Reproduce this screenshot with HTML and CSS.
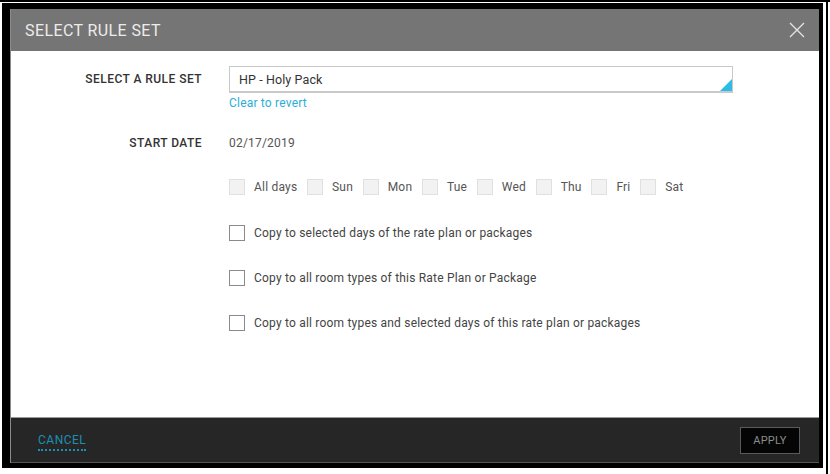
FILE: index.html
```html
<!DOCTYPE html>
<html lang="en">
<head>
<meta charset="utf-8">
<title>Select Rule Set</title>
<link rel="stylesheet" href="styles.css">
</head>
<body>
<div class="screen">
  <div class="frame">
    <div class="dialog">
      <header class="dlg-head">
        <h1 class="dlg-title">SELECT RULE SET</h1>
        <button class="close" aria-label="Close">
          <svg width="16" height="16" viewBox="0 0 16 16"><path d="M1 1 L15 15 M15 1 L1 15" stroke="#e6e6e6" stroke-width="1.3" fill="none"/></svg>
        </button>
      </header>
      <main class="dlg-body">
        <div class="row row-ruleset">
          <span class="lbl">SELECT A RULE SET</span>
          <div class="field">
            <div class="select">HP - Holy Pack<span class="corner"></span></div>
            <a class="clear">Clear to revert</a>
          </div>
        </div>
        <div class="row row-date">
          <span class="lbl">START DATE</span>
          <span class="date">02/17/2019</span>
        </div>
        <div class="days">
          <span class="day"><span class="cb cb-off"></span>All days</span>
          <span class="day"><span class="cb cb-off"></span>Sun</span>
          <span class="day"><span class="cb cb-off"></span>Mon</span>
          <span class="day"><span class="cb cb-off"></span>Tue</span>
          <span class="day"><span class="cb cb-off"></span>Wed</span>
          <span class="day"><span class="cb cb-off"></span>Thu</span>
          <span class="day"><span class="cb cb-off"></span>Fri</span>
          <span class="day"><span class="cb cb-off"></span>Sat</span>
        </div>
        <div class="opts">
          <label class="opt"><span class="cb"></span>Copy to selected days of the rate plan or packages</label>
          <label class="opt"><span class="cb"></span>Copy to all room types of this Rate Plan or Package</label>
          <label class="opt"><span class="cb"></span>Copy to all room types and selected days of this rate plan or packages</label>
        </div>
      </main>
      <footer class="dlg-foot">
        <a class="cancel">CANCEL</a>
        <button class="apply">APPLY</button>
      </footer>
    </div>
  </div>
  <div class="edge"></div>
</div>
</body>
</html>
```
FILE: styles.css
```css
* { box-sizing: border-box; }
html, body { margin: 0; padding: 0; background: #fff; }
body { font-family: Roboto, "Liberation Sans", sans-serif; }

.screen {
  width: 830px;
  height: 474px;
  display: flex;
  align-items: flex-start;
  border-top: 2px solid #000;
  padding-left: 2px;
}
.frame {
  width: 821px;
  height: 465px;
  margin-top: 1px;
  border-style: solid;
  border-color: #000;
  border-width: 6px 4px 5px 8px;
}
.edge {
  width: 2px;
  height: 472px;
  margin-left: 3px;
  background: #000;
}
.dialog {
  height: 100%;
  display: flex;
  flex-direction: column;
  background: #fff;
  border-left: 1px solid #8a8a8a;
}
.dlg-head {
  height: 42px;
  flex: none;
  background: #757575;
  display: flex;
  align-items: center;
  justify-content: space-between;
  padding: 0 14px 0 14px;
}
.dlg-title {
  margin: 0;
  font-size: 16px;
  font-weight: 400;
  color: #ececec;
  letter-spacing: 0.4px;
}
.close {
  border: 0;
  background: none;
  padding: 0;
  width: 16px;
  height: 16px;
  display: flex;
}
.dlg-body {
  flex: 1;
  padding-top: 15px;
  font-size: 12px;
  letter-spacing: 0.2px;
}
.row {
  display: grid;
  grid-template-columns: 191px 1fr;
  column-gap: 27px;
}
.lbl {
  text-align: right;
  font-weight: 500;
  color: #333;
  font-size: 12px;
  letter-spacing: 0.45px;
}
.row-ruleset .lbl { line-height: 27px; }
.field { width: 504px; }
.select {
  position: relative;
  height: 27px;
  border: 1px solid #c9c9c9;
  border-bottom-width: 2px;
  padding-left: 9px;
  line-height: 26px;
  color: #333;
  font-size: 12.5px;
  letter-spacing: 0.1px;
}
.corner {
  position: absolute;
  right: 0;
  bottom: 0;
  width: 0;
  height: 0;
  border-style: solid;
  border-width: 0 0 12px 12px;
  border-color: transparent transparent #2bbde6 transparent;
}
.clear {
  display: block;
  margin-top: 3px;
  color: #2aaed6;
  font-size: 12px;
  line-height: 15px;
}
.row-date { margin-top: 24px; line-height: 16px; }
.date { color: #555; font-size: 12px; }

.days {
  display: flex;
  margin-top: 28px;
  padding-left: 218px;
  color: #555;
  line-height: 16px;
}
.day {
  display: flex;
  align-items: center;
  margin-right: 9.7px;
}
.cb {
  display: inline-block;
  width: 16px;
  height: 16px;
  flex: none;
  margin-right: 9px;
  border: 1px solid #8a8a8a;
  background: #fff;
}
.cb-off {
  border-color: #e0e0e0;
  background: #f2f2f2;
}
.opts {
  display: flex;
  flex-direction: column;
  gap: 29px;
  margin-top: 30px;
  padding-left: 218px;
}
.opt {
  display: flex;
  align-items: center;
  color: #444;
  line-height: 16px;
}

.dlg-foot {
  height: 46px;
  flex: none;
  background: #262626;
  border-top: 1px solid #9a9a9a;
  border-bottom: 1px solid #555;
  display: flex;
  align-items: center;
  justify-content: space-between;
  padding: 0 19px 0 27px;
}
.cancel {
  color: #1c8fb3;
  font-size: 12px;
  letter-spacing: 0.5px;
  padding-bottom: 2px;
  border-bottom: 2px dotted #1c8fb3;
  line-height: 14px;
  margin-top: 4px;
}
.apply {
  width: 60px;
  height: 27px;
  background: #050505;
  border: 1px solid #5a5a5a;
  color: #8c8c8c;
  font-family: Roboto, "Liberation Sans", sans-serif;
  font-size: 11px;
  letter-spacing: 0.2px;
  padding: 0;
  margin-top: 1px;
}
```
